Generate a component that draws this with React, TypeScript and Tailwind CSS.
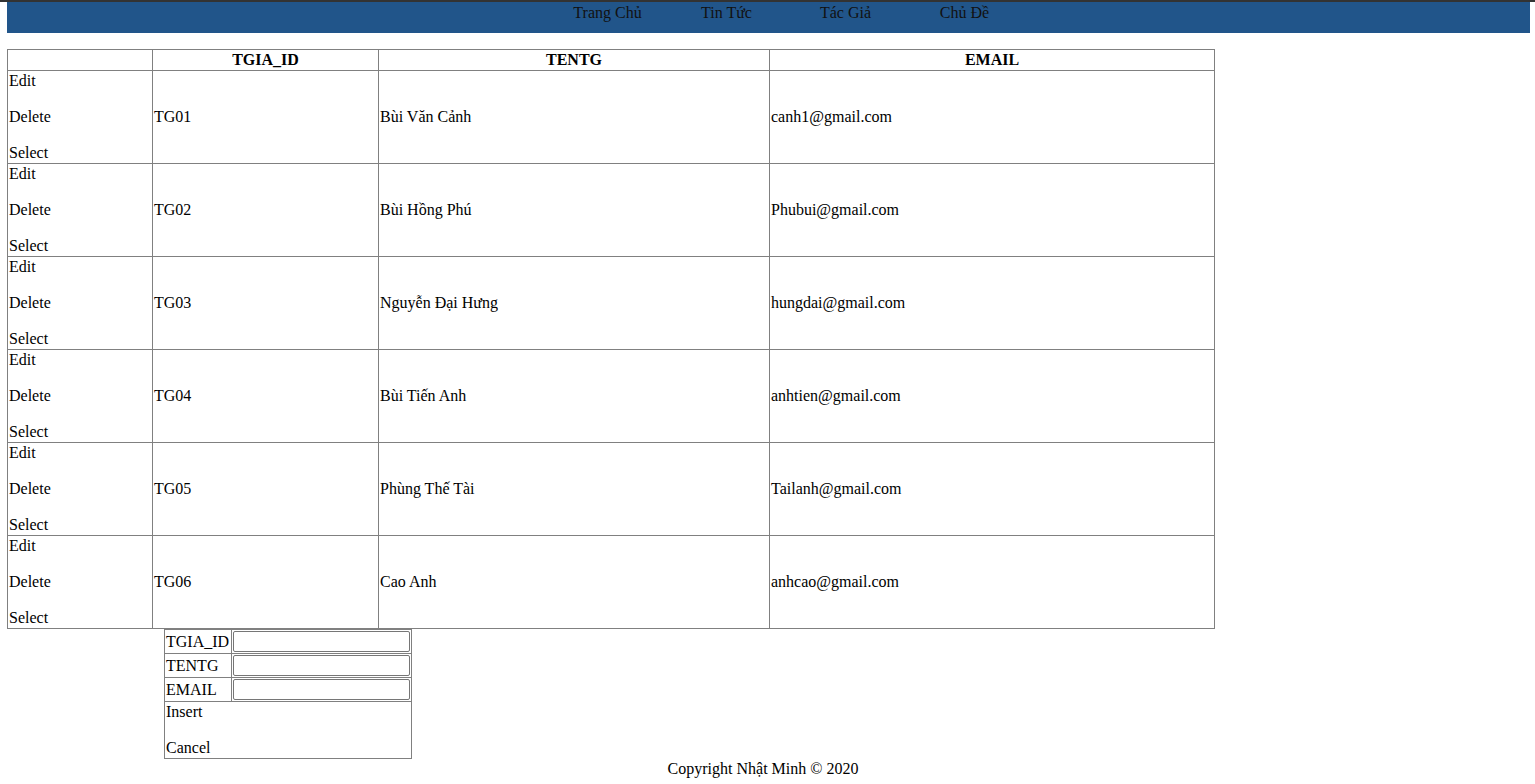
import React from "react";

const authors = [
  { id: "TG01", name: "Bùi Văn Cảnh", email: "canh1@gmail.com" },
  { id: "TG02", name: "Bùi Hồng Phú", email: "Phubui@gmail.com" },
  { id: "TG03", name: "Nguyễn Đại Hưng", email: "hungdai@gmail.com" },
  { id: "TG04", name: "Bùi Tiến Anh", email: "anhtien@gmail.com" },
  { id: "TG05", name: "Phùng Thế Tài", email: "Tailanh@gmail.com" },
  { id: "TG06", name: "Cao Anh", email: "anhcao@gmail.com" },
];

const navItems = ["Trang Chủ", "Tin Tức", "Tác Giả", "Chủ Đề"];

export default function App() {
  return (
    <div className="min-h-[784px] bg-white text-black text-[16px] leading-[18px] font-['Liberation_Serif','Times_New_Roman',serif]">
      <div className="h-[2px] bg-[#333333]" />

      <div className="pl-[7px] pr-[5px]">
        {/* Menu */}
        <div className="h-[31px] bg-[#21558a] pt-[2px]">
          <ul className="flex pl-[541px]">
            {navItems.map((item) => (
              <li key={item} className="w-[119px] text-center text-[#111111]">
                {item}
              </li>
            ))}
          </ul>
        </div>

        {/* Author grid */}
        <table className="mt-[16px] w-[1208px] border-collapse border border-[#808080]">
          <thead>
            <tr className="h-[21px]">
              <th className="w-[145px] border border-[#808080] p-px" />
              <th className="w-[226px] border border-[#808080] p-px font-bold">TGIA_ID</th>
              <th className="w-[391px] border border-[#808080] p-px font-bold">TENTG</th>
              <th className="border border-[#808080] p-px font-bold">EMAIL</th>
            </tr>
          </thead>
          <tbody>
            {authors.map((a) => (
              <tr key={a.id}>
                <td className="border border-[#808080] p-px align-middle">
                  <div>Edit</div>
                  <div className="mt-[18px]">Delete</div>
                  <div className="mt-[18px]">Select</div>
                </td>
                <td className="border border-[#808080] p-px align-middle">{a.id}</td>
                <td className="border border-[#808080] p-px align-middle">{a.name}</td>
                <td className="border border-[#808080] p-px align-middle">{a.email}</td>
              </tr>
            ))}
          </tbody>
        </table>

        {/* Insert form */}
        <table className="ml-[157px] w-[248px] border-collapse border border-[#808080]">
          <tbody>
            {["TGIA_ID", "TENTG", "EMAIL"].map((label) => (
              <tr key={label} className="h-[24px]">
                <td className="w-[67px] border border-[#808080] p-px align-middle">{label}</td>
                <td className="border border-[#808080] p-px align-middle">
                  <input
                    type="text"
                    className="block h-[21px] w-[177px] rounded-[2px] border border-[#767676] bg-white px-[2px] outline-none"
                  />
                </td>
              </tr>
            ))}
            <tr>
              <td colSpan={2} className="border border-[#808080] p-px">
                <div>Insert</div>
                <div className="mt-[18px]">Cancel</div>
              </td>
            </tr>
          </tbody>
        </table>

        <div className="mt-[1px] pr-[11px] text-center">Copyright Nhật Minh © 2020</div>
      </div>
    </div>
  );
}
